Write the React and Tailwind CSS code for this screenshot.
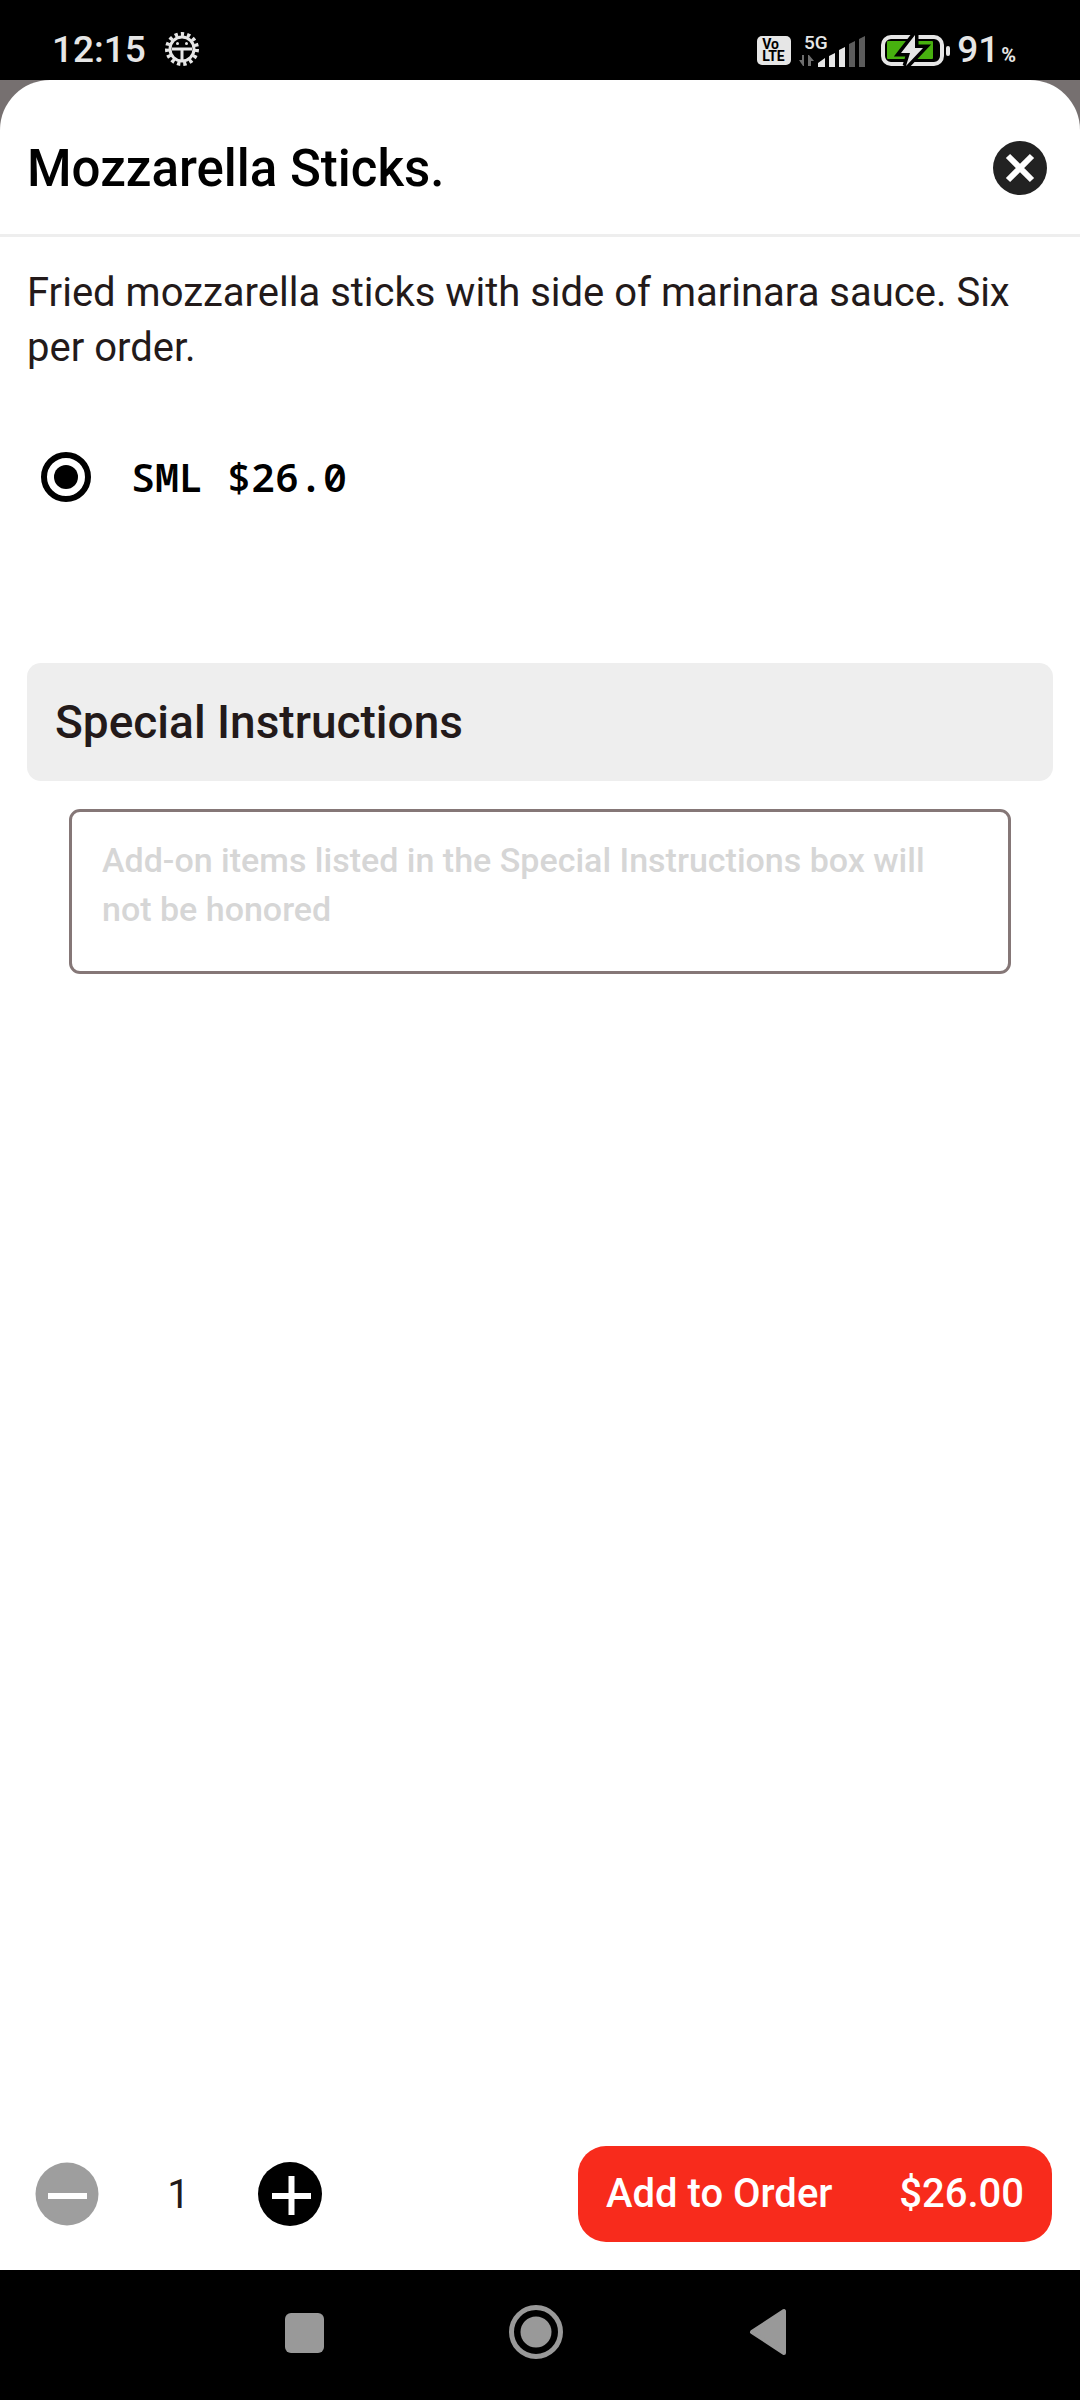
import React, { useState } from 'react';

const StatusBar = () => (
  <div className="flex h-20 items-center justify-between bg-black pl-[52px] pr-16 text-[#e6e6e6]">
    <div className="flex items-center gap-[18px] pt-5">
      <span className="text-[37px] leading-9 font-medium">12:15</span>
      {/* Debug bug icon */}
      <svg className="h-9 w-9" viewBox="0 0 36 36" fill="none">
        <circle cx="18" cy="17" r="12" stroke="#e6e6e6" strokeWidth="3" />
        <circle cx="18" cy="17" r="15" stroke="#e6e6e6" strokeWidth="4" strokeDasharray="3.280 3" />
        <path d="M8 17h20M18 17v12" stroke="#e6e6e6" strokeWidth="3" />
        <circle cx="13.500" cy="11.500" r="1.500" fill="#e6e6e6" />
        <circle cx="22.500" cy="11.500" r="1.500" fill="#e6e6e6" />
      </svg>
    </div>

    <div className="flex items-center pt-5">
      <div className="flex h-[29px] w-[34px] flex-col justify-center rounded-[5px] bg-[#e6e6e6] pl-[5px] text-[14px] leading-3 font-bold text-black">
        <span>Vo</span>
        <span>LTE</span>
      </div>
      <svg className="ml-2 h-9 w-[70px]" viewBox="0 0 70 36">
        <text x="5" y="17" fontSize="19" fontWeight="500" fill="#e6e6e6">5G</text>
        <path d="M5 23v11h-1L0 28h3v-5zM9 34V23h1l5 6h-3v5z" fill="#6e6e6e" />
        <path d="M19 35v-4l7-5v9zM30 35V24l6-3v14zM40 35V18l6-3v20z" fill="#e6e6e6" />
        <path d="M50 35V12l6-3v26zM60 35V7l6-3v31z" fill="#5c5c5c" />
      </svg>
      <svg className="ml-3 h-9 w-[70px]" viewBox="0 0 70 36" fill="none">
        <rect x="2" y="5" width="59" height="27" rx="8" stroke="#e6e6e6" strokeWidth="4" />
        <rect x="6" y="9" width="46" height="18" rx="1" fill="#47b00f" />
        <path d="M34 3 20 21h9l-4 13 17-18h-8z" fill="#e6e6e6" stroke="#000" strokeWidth="7" paintOrder="stroke" />
        <rect x="65" y="14" width="4" height="10" rx="2" fill="#e6e6e6" />
      </svg>
      <span className="ml-1.5 text-[37px] leading-9 font-medium">91</span>
      <span className="ml-0.5 pt-2.5 text-[20px] leading-6 font-bold">%</span>
    </div>
  </div>
);

const NavigationBar = () => (
  <nav className="flex h-[130px] items-center justify-center gap-[178px] bg-black pr-2 pb-1.5">
    <button aria-label="Recent apps">
      <svg className="h-14 w-[54px]" viewBox="0 0 54 56" fill="#999">
        <rect x="8" y="9" width="39" height="40" rx="6" />
      </svg>
    </button>
    <button aria-label="Home">
      <svg className="h-14 w-[54px]" viewBox="0 0 54 56" fill="#999">
        <circle cx="27" cy="28" r="24.500" fill="none" stroke="#999" strokeWidth="5" />
        <circle cx="27" cy="28" r="15.500" />
      </svg>
    </button>
    <button aria-label="Back">
      <svg className="h-14 w-[54px]" viewBox="0 0 54 56" fill="#999">
        <path d="M11 28 43 7v42z" stroke="#999" strokeWidth="4" strokeLinejoin="round" />
      </svg>
    </button>
  </nav>
);

export default function App() {
  const [quantity, setQuantity] = useState(1);
  const [size, setSize] = useState('SML');

  return (
    <div className="flex min-h-screen flex-col bg-black font-['Roboto',sans-serif]">
      <StatusBar />

      <div className="flex flex-1 flex-col bg-[#767070]">
        <div className="flex flex-1 flex-col rounded-t-[50px] bg-white">
          {/* Header */}
          <header className="flex items-center justify-between border-b-[3px] border-[#eeeeee] pt-9 pr-8 pb-3 pl-[27px]">
            <h1 className="text-[51px] leading-[106px] font-medium text-black">Mozzarella Sticks.</h1>
            <button aria-label="Close">
              <svg className="h-14 w-14" viewBox="0 0 56 56">
                <circle cx="28" cy="27" r="27" fill="#222" />
                <path d="m16 15 24 24M40 15 16 39" stroke="#fff" strokeWidth="6" />
              </svg>
            </button>
          </header>

          <main className="flex-1 px-[27px] pt-7">
            <p className="pr-7 text-[40px] leading-[55px] text-[#231a1a]">
              Fried mozzarella sticks with side of marinara sauce. Six per order.
            </p>

            <label className="mt-[74px] flex items-center gap-10 pl-3.5 text-black">
              <input
                type="radio"
                name="size"
                value="SML"
                checked={size === 'SML'}
                onChange={(e) => setSize(e.target.value)}
                className="m-0 h-[50px] w-[50px] appearance-none rounded-full border-[6px] border-black bg-white bg-clip-content p-[7px] checked:bg-black"
              />
              <span className="font-['Noto_Sans_Mono','DejaVu_Sans_Mono',monospace] text-[40px] leading-[55px] font-semibold">SML $26.0</span>
            </label>

            <h2 className="mt-[159px] rounded-[14px] bg-[#eeeeee] px-7 text-[46px] leading-[118px] font-medium text-[#231a1a]">
              Special Instructions
            </h2>
            <div className="mt-7 px-[42px]">
              <textarea
                rows={2}
                aria-label="Special Instructions"
                placeholder="Add-on items listed in the Special Instructions box will not be honored"
                className="block h-[165px] w-full resize-none rounded-[11px] border-[3px] border-[#857777] px-[30px] pt-6 text-[34px] leading-[49px] font-medium text-[#231a1a] placeholder:text-[#d6d6d6]"
              />
            </div>
          </main>

          {/* Quantity and total */}
          <footer className="flex items-center justify-between pr-7 pb-7 pl-[35px]">
            <div className="flex items-center text-[#231a1a]">
              <button aria-label="Decrease quantity" onClick={() => setQuantity(Math.max(1, quantity - 1))}>
                <svg className="h-16 w-16" viewBox="0 0 64 64">
                  <circle cx="32" cy="32" r="31.500" fill="#9e9e9e" />
                  <path d="M13 34h39" stroke="#fff" strokeWidth="6" />
                </svg>
              </button>
              <span className="w-[159px] text-center text-[40px] leading-[55px]">{quantity}</span>
              <button aria-label="Increase quantity" onClick={() => setQuantity(quantity + 1)}>
                <svg className="h-16 w-16" viewBox="0 0 64 64">
                  <circle cx="32" cy="32" r="32" fill="#000" />
                  <path d="M14 34h39M33.500 14v39" stroke="#fff" strokeWidth="6" />
                </svg>
              </button>
            </div>
            <button className="flex w-[474px] items-center justify-between rounded-[28px] bg-[#f82b1c] px-7 text-[40px] leading-[96px] font-medium text-white">
              <span>Add to Order</span>
              <span>${(quantity * 26).toFixed(2)}</span>
            </button>
          </footer>
        </div>
      </div>

      <NavigationBar />
    </div>
  );
}
